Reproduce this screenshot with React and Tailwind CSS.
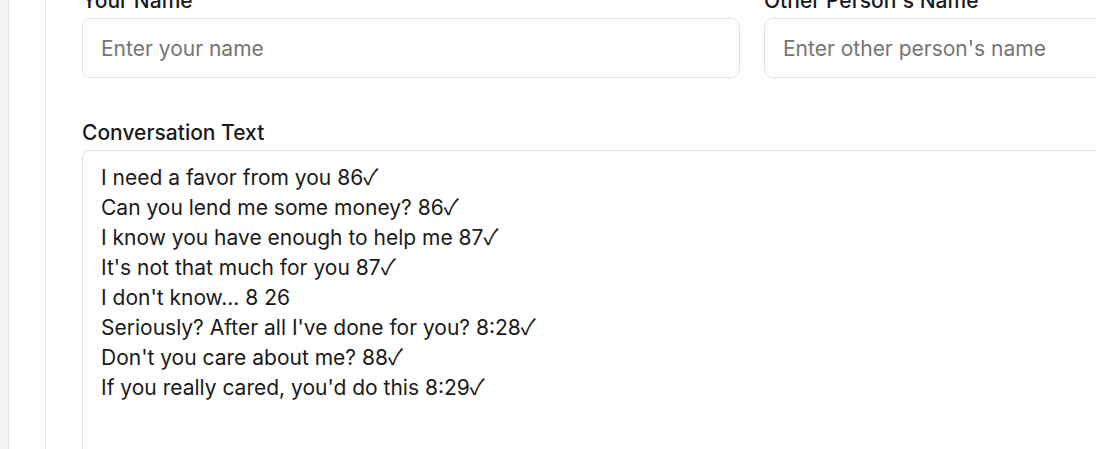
import React from "react";

const lines = [
  ["I need a favor from you 86", true],
  ["Can you lend me some money? 86", true],
  ["I know you have enough to help me 87", true],
  ["It's not that much for you 87", true],
  ["I don't know... 8 26", false],
  ["Seriously? After all I've done for you? 8:28", true],
  ["Don't you care about me? 88", true],
  ["If you really cared, you'd do this 8:29", true],
];

export default function App() {
  return (
    <div
      className="flex h-[449px] w-[1096px] overflow-hidden bg-white text-[#1a1a1a]"
      style={{ fontFamily: "Inter, 'Noto Sans', sans-serif" }}
    >
      <div className="w-[9px] shrink-0 border-r border-[#e5e5e5] bg-[#f4f4f4]" />
      <div className="w-[37px] shrink-0 border-r border-[#e5e5e5] bg-white" />
      <div className="mt-[-11px] shrink-0 pl-[36px]">
        <div className="grid w-[1340px] grid-cols-2 gap-6">
          <div>
            <label className="mb-[5px] block text-[21px] leading-6 font-medium">Your Name</label>
            <input
              className="h-[60px] w-full rounded-lg border border-[#e3e3e3] px-[18px] text-[21px] text-[#1a1a1a] outline-none placeholder:text-[#757575]"
              placeholder="Enter your name"
            />
          </div>
          <div>
            <label className="mb-[5px] block text-[21px] leading-6 font-medium">Other Person's Name</label>
            <input
              className="h-[60px] w-full rounded-lg border border-[#e3e3e3] px-[18px] text-[21px] text-[#1a1a1a] outline-none placeholder:text-[#757575]"
              placeholder="Enter other person's name"
            />
          </div>
        </div>
        <div className="mt-[43px] w-[1340px]">
          <label className="mb-[5px] block text-[21px] leading-6 font-medium">Conversation Text</label>
          <div
            role="textbox"
            aria-multiline="true"
            className="h-[400px] w-full rounded-lg border border-[#e3e3e3] px-[18px] pt-[12px] text-[21px] leading-[30px] text-[#1a1a1a]"
          >
            {lines.map(([t, c], i) => (
              <div key={i} className="h-[30px] whitespace-pre">
                {t}
                {c && (
                  <span
                    style={{ fontFamily: "'Noto Sans CJK SC', sans-serif" }}
                    className="text-[22px] leading-none"
                  >
                    ✓
                  </span>
                )}
              </div>
            ))}
          </div>
        </div>
      </div>
    </div>
  );
}
